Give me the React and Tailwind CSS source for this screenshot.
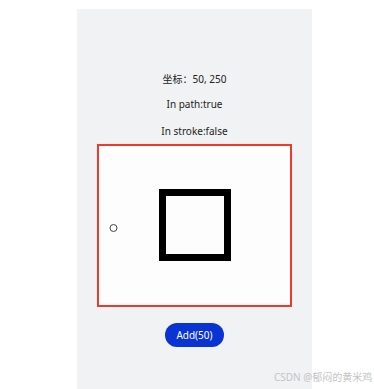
export default function App() {
  const font = { fontFamily: '"Noto Sans", "Noto Sans CJK SC", sans-serif' }
  return (
    <div className="relative w-[374px] h-[389px] bg-white overflow-hidden" style={font}>
      <div className="ml-[77px] mt-[9px] w-[235px] h-[380px] bg-[#f1f2f4] flex flex-col items-center pt-[62px]">
        <p className="h-[16px] leading-[16px] text-[10px] text-[#222]">坐标：50, 250</p>
        <p className="mt-[9px] h-[16px] leading-[16px] text-[10px] text-[#222]">In path:true</p>
        <p className="mt-[11px] h-[16px] leading-[16px] text-[10px] text-[#222]">In stroke:false</p>
        <div className="mt-[5px] w-[195px] h-[163px] border-2 border-[#f0392b] bg-[#fdfdfd]">
          <svg width="191" height="159" viewBox="0 0 191 159">
            <rect x="63.5" y="46.5" width="65" height="65" fill="none" stroke="#000" strokeWidth="7" />
            <circle cx="14.5" cy="82" r="3.5" fill="none" stroke="#444" strokeWidth="1" />
          </svg>
        </div>
        <button className="mt-[16px] w-[59px] h-[24px] rounded-full bg-[#0a33d4] text-white text-[10px] leading-[24px]">
          Add(50)
        </button>
      </div>
      <span className="absolute left-[274px] top-[370px] text-[10px] leading-[14px] text-[#c4c4c4] whitespace-nowrap">
        CSDN @郁闷的黄米鸡
      </span>
    </div>
  )
}
